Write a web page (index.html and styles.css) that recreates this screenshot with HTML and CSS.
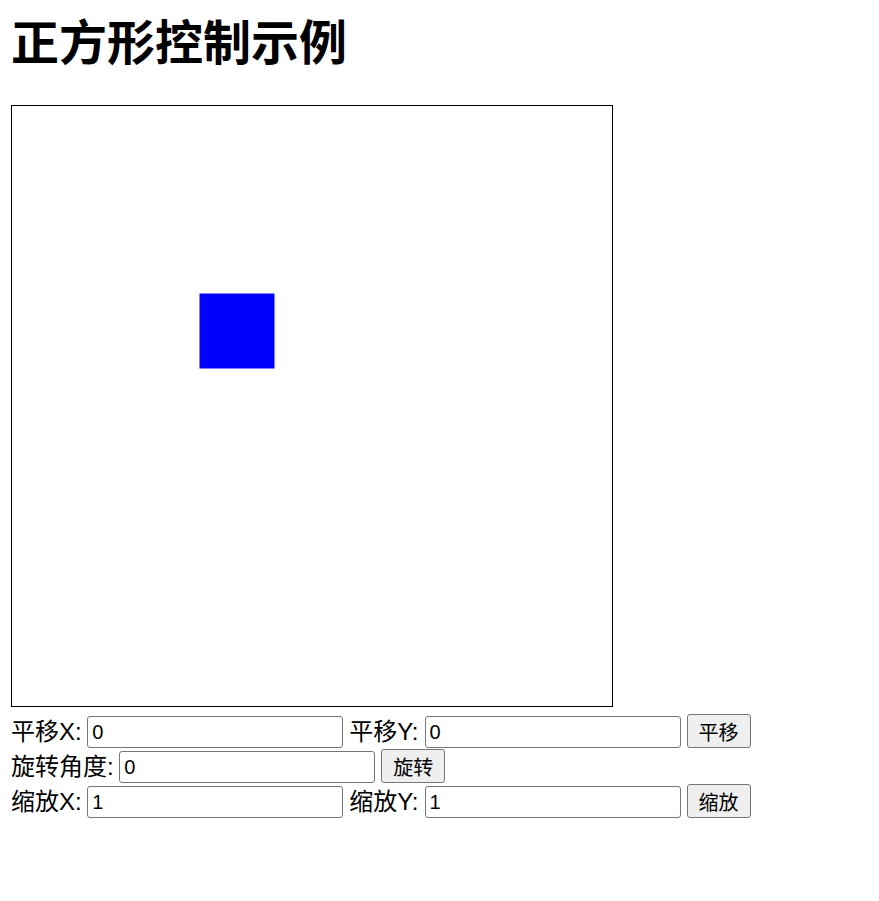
FILE: index.html
```html
<!DOCTYPE html>
<html lang="zh-CN">
<head>
<meta charset="utf-8">
<title>正方形控制示例</title>
<link rel="stylesheet" href="styles.css">
</head>
<body>
<h1 class="title">正方形控制示例</h1>
<div class="stage">
  <svg class="stage-svg" width="600" height="600" viewBox="0 0 600 600">
    <rect x="187.5" y="187.5" width="75" height="75" fill="#0000ff"/>
  </svg>
</div>
<div class="controls">
  <div class="row">
    <label class="lbl">平移X:</label>
    <input class="field" type="text" value="0">
    <label class="lbl">平移Y:</label>
    <input class="field" type="text" value="0">
    <button class="btn">平移</button>
  </div>
  <div class="row">
    <label class="lbl">旋转角度:</label>
    <input class="field" type="text" value="0">
    <button class="btn">旋转</button>
  </div>
  <div class="row">
    <label class="lbl">缩放X:</label>
    <input class="field" type="text" value="1">
    <label class="lbl">缩放Y:</label>
    <input class="field" type="text" value="1">
    <button class="btn">缩放</button>
  </div>
</div>
</body>
</html>
```
FILE: styles.css
```css
html, body {
  background: #ffffff;
}
body {
  margin: 16px 11px 0 11px;
  font-family: "Liberation Sans", "Noto Sans CJK SC", sans-serif;
  font-size: 24px;
  color: #000000;
}
.title {
  margin: 0 0 33px 0;
  font-size: 48px;
  line-height: 56px;
  font-weight: bold;
}
.stage {
  width: 600px;
  height: 600px;
  border: 1px solid #000000;
}
.stage-svg {
  display: block;
}
.controls {
  margin-top: 7px;
}
.row {
  display: flex;
  align-items: flex-end;
  gap: 6px;
  height: 35px;
  box-sizing: border-box;
  padding-bottom: 1px;
}
.lbl {
  align-self: center;
  line-height: 35px;
  white-space: nowrap;
}
.lbl:first-child {
  margin-right: -0.5px;
}
.field {
  box-sizing: border-box;
  width: 256px;
  height: 32px;
  margin: 0;
  padding: 0 4px;
  border: 1px solid #767676;
  border-radius: 3px;
  font-family: "Liberation Sans", "Noto Sans CJK SC", sans-serif;
  font-size: 20px;
  color: #000000;
  background: #ffffff;
}
.btn {
  box-sizing: border-box;
  height: 34px;
  margin: 0;
  padding: 0 11px;
  border: 1px solid #767676;
  border-radius: 3px;
  background: #efefef;
  font-family: "Liberation Sans", "Noto Sans CJK SC", sans-serif;
  font-size: 20px;
  color: #000000;
}
```
